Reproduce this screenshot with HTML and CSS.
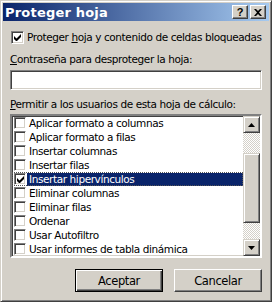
FILE: index.html
```html
<!DOCTYPE html>
<html>
<head>
	<title>Proteger hoja</title>
	<link rel="stylesheet" href="styles.css">
</head>
<body>
<div class="dialog">
	<div class="titlebar">
		<span class="title">Proteger hoja</span>
		<div class="caption">
			<span class="cap-btn help">?</span>
			<span class="cap-btn close">
				<svg width="8" height="7" viewBox="0 0 8 7"><path d="M0 0h2l2 2 2-2h2L5 3.5 8 7H6L4 5 2 7H0l3-3.5z" fill="#000"/></svg>
			</span>
		</div>
	</div>
	<div class="content">
		<div class="check-row">
			<span class="chk checked">
				<svg width="7" height="7" viewBox="0 0 7 7"><path d="M0 2v3l2 2h1l4-4V0L2.5 4.5z" fill="#000"/></svg>
			</span>
			<span>Proteger <u>h</u>oja y contenido de celdas bloqueadas</span>
		</div>
		<div class="field-label"><u>C</u>ontraseña para desproteger la hoja:</div>
		<div class="textbox"></div>
		<div class="field-label list-label"><u>P</u>ermitir a los usuarios de esta hoja de cálculo:</div>
		<div class="listbox">
			<ul class="items">
				<li><span class="chk"></span><span class="txt">Aplicar formato a columnas</span></li>
				<li><span class="chk"></span><span class="txt">Aplicar formato a filas</span></li>
				<li><span class="chk"></span><span class="txt">Insertar columnas</span></li>
				<li><span class="chk"></span><span class="txt">Insertar filas</span></li>
				<li class="selected"><span class="chk checked"><svg width="7" height="7" viewBox="0 0 7 7"><path d="M0 2v3l2 2h1l4-4V0L2.5 4.5z" fill="#000"/></svg></span><span class="txt">Insertar hipervínculos</span></li>
				<li><span class="chk"></span><span class="txt">Eliminar columnas</span></li>
				<li><span class="chk"></span><span class="txt">Eliminar filas</span></li>
				<li><span class="chk"></span><span class="txt">Ordenar</span></li>
				<li><span class="chk"></span><span class="txt">Usar Autofiltro</span></li>
				<li><span class="chk"></span><span class="txt">Usar informes de tabla dinámica</span></li>
			</ul>
			<div class="scrollbar">
				<span class="sb-btn"><svg width="7" height="4" viewBox="0 0 7 4"><path d="M3.5 0L7 4H0z" fill="#000"/></svg></span>
				<div class="track">
					<span class="thumb"></span>
				</div>
				<span class="sb-btn"><svg width="7" height="4" viewBox="0 0 7 4"><path d="M0 0h7L3.5 4z" fill="#000"/></svg></span>
			</div>
		</div>
		<div class="buttons">
			<span class="btn default">Aceptar</span>
			<span class="btn">Cancelar</span>
		</div>
	</div>
</div>
</body>
</html>
```

FILE: styles.css
```css
	body {margin: 0; background: #d4d0c8;}
	.dialog {box-sizing: border-box; width: 272px; height: 302px; padding: 2px; border: 1px solid; border-color: #d4d0c8 #404040 #404040 #d4d0c8; box-shadow: inset 1px 1px #fff, inset -1px -1px #808080; background: #d4d0c8; font-family: "DejaVu Sans", sans-serif; font-size: 10.5px; letter-spacing: -0.4px; color: #000; white-space: nowrap;}

/* title bar */
	.titlebar {display: flex; align-items: center; justify-content: space-between; height: 18px; padding: 0 3px 0 2px; background: linear-gradient(to right, #0a246a, #a6caf0);}
	.title {color: #fff; font-weight: bold; font-size: 13px; letter-spacing: 0.2px;}
	.caption {display: flex; gap: 2px;}
	.cap-btn {box-sizing: border-box; display: flex; align-items: center; justify-content: center; width: 16px; height: 14px; background: #d4d0c8; border: 1px solid; border-color: #fff #404040 #404040 #fff; box-shadow: inset -1px -1px #808080; font-family: "Liberation Sans", sans-serif; font-weight: bold; font-size: 11px; line-height: 1; letter-spacing: 0;}

/* body */
	.content {display: flex; flex-direction: column; padding: 0 7px;}
	.check-row {display: flex; align-items: center; gap: 3px; height: 13px; margin-top: 10px; margin-left: 1px; line-height: 13px;}
	.chk {box-sizing: border-box; display: flex; align-items: center; justify-content: center; flex: none; width: 13px; height: 13px; background: #fff; border: 1px solid; border-color: #808080 #fff #fff #808080; box-shadow: inset 1px 1px #404040, inset -1px -1px #d4d0c8;}
	.field-label {height: 13px; line-height: 13px; margin-top: 9px;}
	.list-label {margin-top: 8px;}
	.textbox {box-sizing: border-box; height: 20px; margin-top: 4px; background: #fff; border: 1px solid; border-color: #808080 #fff #fff #808080; box-shadow: inset 1px 1px #404040, inset -1px -1px #d4d0c8;}

/* list */
	.listbox {display: flex; box-sizing: border-box; height: 144px; margin-top: 3px; background: #fff; border: 2px solid; border-color: #808080 #fff #fff #808080; box-shadow: inset 1px 1px #404040, inset -1px -1px #d4d0c8;}
	.items {flex: 1; margin: 0; padding: 0; list-style: none;}
	.items li {display: flex; align-items: center; height: 14px; padding-left: 2px;}
	.items .chk {width: 12px; height: 12px;}
	.items .txt {flex: 1; height: 13px; margin-left: 1px; padding-left: 2px; line-height: 13px;}
	.items .selected .txt {background: #0a246a; color: #fff;}
	.items .selected {outline: 1px dotted #555; outline-offset: -1px;}

	.scrollbar {display: flex; flex-direction: column; width: 17px;}
	.sb-btn, .thumb {box-sizing: border-box; display: flex; align-items: center; justify-content: center; flex: none; height: 17px; background: #d4d0c8; border: 1px solid; border-color: #d4d0c8 #404040 #404040 #d4d0c8; box-shadow: inset 1px 1px #fff, inset -1px -1px #808080;}
	.track {flex: 1; padding-top: 20px; background: repeating-conic-gradient(#fff 0 25%, #d4d0c8 0 50%) 0 0/2px 2px;}
	.thumb {height: 70px;}

/* buttons */
	.buttons {display: flex; justify-content: flex-end; gap: 11px; margin-top: 11px;}
	.btn {box-sizing: border-box; display: flex; align-items: center; justify-content: center; width: 88px; height: 23px; background: #d4d0c8; border: 1px solid; border-color: #fff #404040 #404040 #fff; box-shadow: inset -1px -1px #808080; font-size: 11.5px;}
	.btn.default {border: 1px solid #000; box-shadow: inset 1px 1px #fff, inset -1px -1px #404040, inset -2px -2px #808080;}
```
